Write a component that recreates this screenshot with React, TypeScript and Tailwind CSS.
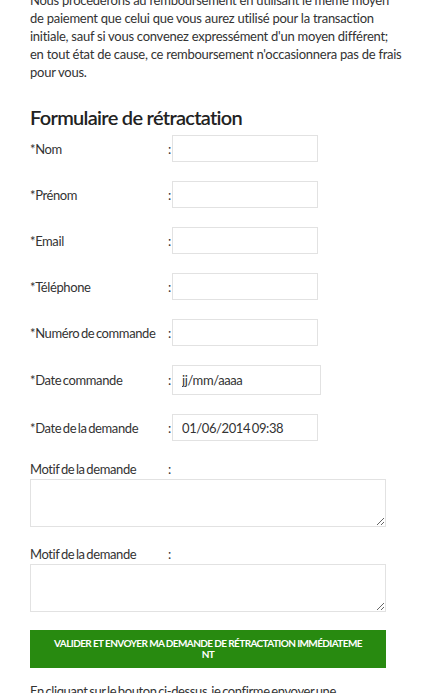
import React from 'react';

const fields = [
  { label: '*Nom', value: '' },
  { label: '*Prénom', value: '' },
  { label: '*Email', value: '' },
  { label: '*Téléphone', value: '' },
  { label: '*Numéro de commande', value: '' },
];

function Row({ label, children }: { label: string; children: React.ReactNode }) {
  return (
    <div className="flex items-center mb-[19px]">
      <span className="w-[138px] shrink-0">{label}</span>
      <span className="w-[4px] shrink-0">:</span>
      {children}
    </div>
  );
}

export default function App() {
  const inputCls =
    'h-[27px] w-[146px] border border-[#e2e2e2] bg-white px-[9px] text-[13px] text-[#333] outline-none tracking-[-0.03em] [word-spacing:-0.1em]';

  return (
    <div
      className="min-h-[693px] bg-white overflow-hidden text-[13px] leading-[18px] text-[#333] tracking-[-0.03em] [word-spacing:-0.1em]"
      style={{ fontFamily: 'Lato, "Open Sans", sans-serif' }}
    >
      <div className="px-[30px] w-[386px] box-content">
        {/* paragraph is cut by the top edge of the screenshot */}
        <p className="mt-[-9px] w-[356px] whitespace-nowrap tracking-[-0.02em] [word-spacing:0]">
          Nous procéderons au remboursement en utilisant le même moyen
          <br />
          de paiement que celui que vous aurez utilisé pour la transaction
          <br />
          initiale, sauf si vous convenez expressément d'un moyen différent;
          <br />
          en tout état de cause, ce remboursement n'occasionnera pas de frais
          <br />
          pour vous.
        </p>

        <h2 className="mt-[22px] mb-[4px] text-[20px] leading-[28px] font-semibold text-[#222] tracking-[-0.035em] [word-spacing:0]">
          Formulaire de rétractation
        </h2>

        <form>
          {fields.map((f) => (
            <Row key={f.label} label={f.label}>
              <input type="text" className={inputCls} defaultValue={f.value} />
            </Row>
          ))}

          <Row label="*Date commande">
            <input
              type="text"
              className="h-[30px] w-[149px] border border-[#e2e2e2] bg-white px-[9px] text-[13px] text-[#333] outline-none tracking-[-0.03em]"
              defaultValue="jj/mm/aaaa"
            />
          </Row>

          <Row label="*Date de la demande">
            <input type="text" className={inputCls} defaultValue="01/06/2014 09:38" />
          </Row>

          <div className="flex mt-[18px]">
            <span className="w-[138px] shrink-0">Motif de la demande</span>
            <span>:</span>
          </div>
          <textarea className="block mt-px h-[48px] w-[356px] border border-[#e2e2e2] bg-white outline-none" />

          <div className="flex mt-[18px]">
            <span className="w-[138px] shrink-0">Motif de la demande</span>
            <span>:</span>
          </div>
          <textarea className="block mt-px h-[48px] w-[356px] border border-[#e2e2e2] bg-white outline-none" />

          <button
            type="button"
            className="mt-[18px] flex h-[38px] w-[356px] flex-col items-center justify-center bg-[#288a10] text-center text-[10px] font-bold uppercase leading-[11px] text-white whitespace-nowrap tracking-[-0.06em] [word-spacing:0]"
          >
            <span>Valider et envoyer ma demande de rétractation immédiateme</span>
            <span>nt</span>
          </button>
        </form>

        <p className="mt-[14px] whitespace-nowrap">
          En cliquant sur le bouton ci-dessus, je confirme envoyer une
          <br />
          demande de rétractation.
        </p>
      </div>
    </div>
  );
}
